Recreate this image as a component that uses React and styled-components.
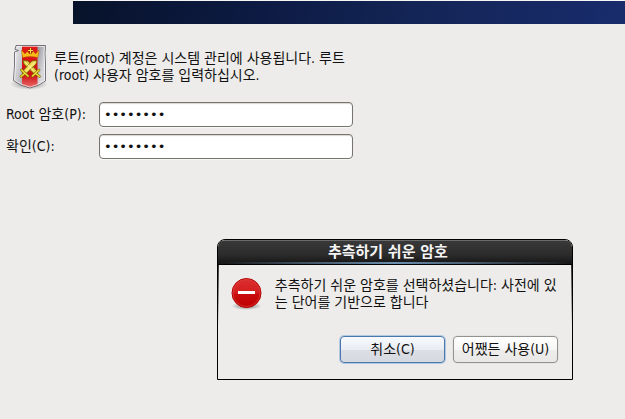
import React from 'react';
import styled, { createGlobalStyle } from 'styled-components';

const GlobalStyle = createGlobalStyle`
  * {
    box-sizing: border-box;
  }

  body {
    margin: 0;
    background: #edecea;
    color: #111;
    font-family: "DejaVu Sans Condensed", "DejaVu Sans", "Noto Sans CJK KR", sans-serif;
    font-stretch: condensed;
    font-size: 14px;
    line-height: 17px;
  }

  button,
  input {
    font: inherit;
    color: inherit;
  }
`;

const ShieldIcon = () => (
  <svg width="38" height="48" viewBox="0 0 38 48" aria-hidden="true">
    <defs>
      <linearGradient id="steel" x1="0" y1="0" x2="1" y2="0.3">
        <stop offset="0" stopColor="#f4f4f6" />
        <stop offset="0.25" stopColor="#d0d0d6" />
        <stop offset="0.7" stopColor="#98969f" />
        <stop offset="1" stopColor="#d8d8dc" />
      </linearGradient>
      <linearGradient id="stripe" x1="0" y1="0" x2="0" y2="1">
        <stop offset="0" stopColor="#e01818" />
        <stop offset="0.7" stopColor="#cf1212" />
        <stop offset="1" stopColor="#e86a6a" />
      </linearGradient>
      <radialGradient id="shieldShadow">
        <stop offset="0" stopColor="#000" stopOpacity="0.4" />
        <stop offset="1" stopColor="#000" stopOpacity="0" />
      </radialGradient>
    </defs>
    <ellipse cx="19" cy="41" rx="19" ry="6" fill="url(#shieldShadow)" />
    <path
      d="M6 2.5H35.5Q34.500 10 35.500 20V38Q29 43 20 45Q10 43 3.500 37.500Q5 22 4.500 9L8.500 7.500L5 6.500Z"
      fill="url(#steel)"
      stroke="#68666d"
      strokeWidth="0.9"
    />
    <path d="M12 3H27.500V42L20 44.500L12 42Z" fill="url(#stripe)" />
    <path
      d="M7 3.500H34.500Q33.500 10 34.500 20V37.500Q28 42 20 44Q11 42 4.500 37Q6 22 5.500 9.500"
      fill="none"
      stroke="#fff"
      strokeOpacity="0.6"
    />
    <path
      d="M11.500 7L15 11L17 8.500L20 11L23.500 8.500L25.500 11L29 7L28 14.500Q20 12.500 12.500 14.500Z"
      fill="#f7bd16"
      stroke="#b85f08"
      strokeWidth="0.5"
    />
    <path d="M20.500 5V11M18 7.500H23" stroke="#8a2c08" strokeWidth="2" />
    <path d="M20.500 5V10.500M18 7.500H23" stroke="#ffe14a" strokeWidth="1" />
    <g transform="translate(1 -1)">
      <path d="M12 18.500L17 19L27 30L24.500 33L13 22Z" fill="#e8d24a" stroke="#756300" strokeWidth="0.8" />
      <path d="M26 18.500L21 19L11 30L13.500 33L25 22Z" fill="#f0dc58" stroke="#756300" strokeWidth="0.8" />
      <path d="M14 20L23 29.500M24.500 20L15 29.500" stroke="#fff4a0" />
      <path
        d="M10.500 28L17 34M28 28L21.500 34M13 32L10 34.500M25.500 32L28.500 34.500"
        stroke="#806b00"
        strokeWidth="2.600"
        strokeLinecap="round"
      />
      <path
        d="M10.500 28L17 34M28 28L21.500 34M13 32L10 34.500M25.500 32L28.500 34.500"
        stroke="#f2dc3c"
        strokeWidth="1.500"
        strokeLinecap="round"
      />
    </g>
  </svg>
);

const StopIcon = () => (
  <svg width="36" height="36" viewBox="0 0 36 36" aria-hidden="true">
    <defs>
      <linearGradient id="stopFill" x1="0" y1="0" x2="0" y2="1">
        <stop offset="0" stopColor="#dc3030" />
        <stop offset="0.5" stopColor="#d31c1e" />
        <stop offset="0.55" stopColor="#c90b0d" />
        <stop offset="1" stopColor="#c00000" />
      </linearGradient>
      <radialGradient id="stopShadow">
        <stop offset="0" stopColor="#000" stopOpacity="0.5" />
        <stop offset="1" stopColor="#000" stopOpacity="0" />
      </radialGradient>
    </defs>
    <ellipse cx="17.500" cy="29" rx="15" ry="4" fill="url(#stopShadow)" />
    <circle cx="17.500" cy="16" r="14.500" fill="url(#stopFill)" stroke="#b30000" />
    <circle cx="17.500" cy="16" r="13.500" fill="none" stroke="#e04848" strokeOpacity="0.6" />
    <path d="M9 14H26V17H9Z" fill="#fff" />
  </svg>
);

const App = () => (
  <>
    <GlobalStyle />
    <Banner />
    <Main>
      <Intro>
        <ShieldIcon />
        <IntroText>
          루트(root) 계정은 시스템 관리에 사용됩니다. 루트
          <br />
          (root) 사용자 암호를 입력하십시오.
        </IntroText>
      </Intro>
      <Form>
        <label htmlFor="password">Root 암호(P):</label>
        <PasswordInput id="password" type="password" defaultValue="password" />
        <label htmlFor="confirm">확인(C):</label>
        <PasswordInput id="confirm" type="password" defaultValue="password" />
      </Form>
    </Main>
    <Dialog role="alertdialog" aria-labelledby="dialog-title">
      <TitleBar id="dialog-title">추측하기 쉬운 암호</TitleBar>
      <DialogBody>
        <Message>
          <StopIcon />
          <p>
            추측하기 쉬운 암호를 선택하셨습니다: 사전에 있
            <br />
            는 단어를 기반으로 합니다
          </p>
        </Message>
        <Actions>
          <Button type="button" $focused>취소(C)</Button>
          <Button type="button">어쨌든 사용(U)</Button>
        </Actions>
      </DialogBody>
    </Dialog>
  </>
);

const Banner = styled.header`
  height: 24px;
  margin-left: 73px;
  border-top: 1px solid #f6f6f4;
  background: linear-gradient(100deg, #07122a 0%, #0d1b44 35%, #142658 65%, #182b6c 100%);
`;

const Main = styled.main`
  padding: 19px 6px 0;
`;

const Intro = styled.div`
  display: flex;
  gap: 6px;
  padding-left: 4px;
`;

const IntroText = styled.p`
  margin: 0;
  padding-top: 7px;
`;

const Form = styled.form`
  display: grid;
  grid-template-columns: 85px minmax(0, 254px);
  align-items: center;
  gap: 7px 8px;
  margin-top: 11px;
`;

const PasswordInput = styled.input`
  width: 100%;
  height: 25px;
  padding: 0 4px;
  border: 1px solid #77736e;
  border-radius: 4px;
  background: #fff;
  box-shadow: inset 0 1px 1px #d8d6d3, 0 1px 0 #f8f8f7;
  font-family: "DejaVu Sans", sans-serif;
  font-stretch: normal;
  font-size: 13px;
  outline: none;
`;

const Dialog = styled.section`
  width: 57%;
  min-width: 356px;
  margin: 80px 52px 0 auto;
  border: 1px solid #000;
  border-radius: 8px 8px 0 0;
  background: #edecea;
  overflow: hidden;
`;

const TitleBar = styled.h1`
  margin: 0;
  padding: 3px 14px 3px 0;
  border-top: 1px solid #6b6b6b;
  border-bottom: 1px solid #000;
  background:
    linear-gradient(90deg, transparent, #6b8fb0 50%, transparent) bottom / 100% 2px no-repeat,
    linear-gradient(#383838, #2c2c2c 60%, #151515);
  color: #f4f4f4;
  font-size: 15px;
  font-weight: bold;
  line-height: 17px;
  text-align: center;
`;

/* the title bar's shade runs down both sides and fades out */
const DialogBody = styled.div`
  padding: 12px 14px 16px 11px;
  background:
    linear-gradient(#333, transparent) left top / 1px 60px no-repeat,
    linear-gradient(#333, transparent) right top / 1px 60px no-repeat;
`;

const Message = styled.div`
  display: flex;
  gap: 10px;

  p {
    margin: 0;
    white-space: nowrap;
  }
`;

const Actions = styled.div`
  display: flex;
  justify-content: flex-end;
  gap: 8px;
  margin-top: 23px;
`;

const Button = styled.button`
  width: 105px;
  height: 27px;
  padding: 0;
  border: 1px solid ${props => (props.$focused ? '#4a78ad' : '#94928f')};
  border-radius: 4px;
  background: ${props =>
    props.$focused
      ? 'linear-gradient(#f7fafd, #e9edf3 50%, #dcdfe5 52%, #d5d9e0)'
      : 'linear-gradient(#ffffff, #f6f6f5 50%, #ededeb 52%, #e9e8e6)'};
  box-shadow: ${props => (props.$focused ? '0 0 0 1px #b3c8e0' : '0 0 0 1px #e4e3e1')};
  white-space: nowrap;
`;

export default App;
